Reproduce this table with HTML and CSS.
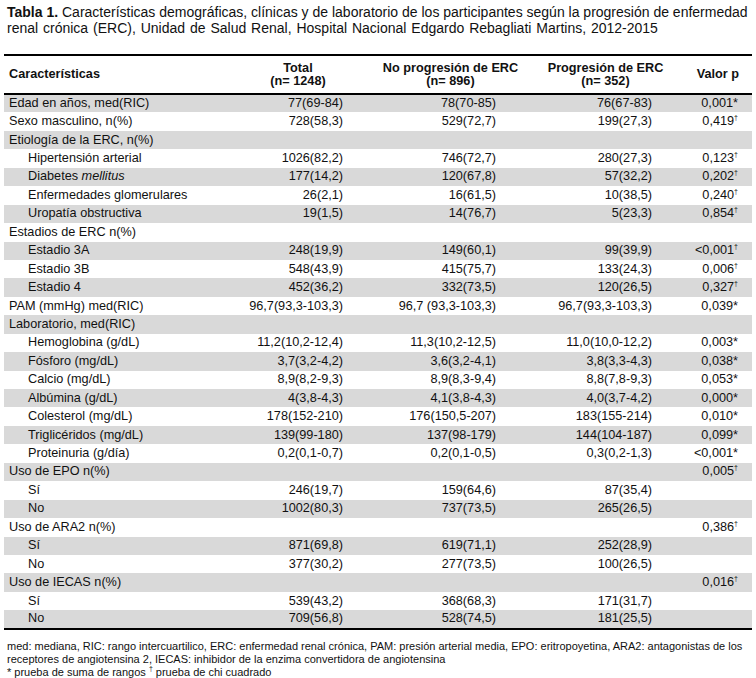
FILE: index.html
```html
<!DOCTYPE html>
<html lang="es">
<head>
<meta charset="utf-8">
<title>Tabla 1</title>
<link rel="stylesheet" href="styles.css">
</head>
<body>
<div class="page">
  <p class="caption"><b>Tabla 1.</b> Características demográficas, clínicas y de laboratorio de los participantes según la progresión de enfermedad<br><span class="cap2">renal crónica (ERC), Unidad de Salud Renal, Hospital Nacional Edgardo Rebagliati Martins, 2012-2015</span></p>
  <table class="data">
    <colgroup>
      <col class="c1"><col class="c2"><col class="c3"><col class="c4"><col class="c5">
    </colgroup>
    <thead>
      <tr>
        <th class="lbl">Características</th>
        <th>Total<br>(n= 1248)</th>
        <th>No progresión de ERC<br>(n= 896)</th>
        <th>Progresión de ERC<br>(n= 352)</th>
        <th class="pv">Valor p</th>
      </tr>
    </thead>
    <tbody>
      <tr class="sh"><td class="lbl">Edad en años, med(RIC)</td><td>77(69-84)</td><td>78(70-85)</td><td>76(67-83)</td><td class="pv">0,001*</td></tr>
      <tr><td class="lbl">Sexo masculino, n(%)</td><td>728(58,3)</td><td>529(72,7)</td><td>199(27,3)</td><td class="pv">0,419<sup>†</sup></td></tr>
      <tr class="sh"><td class="lbl">Etiología de la ERC, n(%)</td><td></td><td></td><td></td><td class="pv"></td></tr>
      <tr><td class="lbl in">Hipertensión arterial</td><td>1026(82,2)</td><td>746(72,7)</td><td>280(27,3)</td><td class="pv">0,123<sup>†</sup></td></tr>
      <tr class="sh"><td class="lbl in">Diabetes <i>mellitus</i></td><td>177(14,2)</td><td>120(67,8)</td><td>57(32,2)</td><td class="pv">0,202<sup>†</sup></td></tr>
      <tr><td class="lbl in">Enfermedades glomerulares</td><td>26(2,1)</td><td>16(61,5)</td><td>10(38,5)</td><td class="pv">0,240<sup>†</sup></td></tr>
      <tr class="sh"><td class="lbl in">Uropatía obstructiva</td><td>19(1,5)</td><td>14(76,7)</td><td>5(23,3)</td><td class="pv">0,854<sup>†</sup></td></tr>
      <tr><td class="lbl">Estadios de ERC n(%)</td><td></td><td></td><td></td><td class="pv"></td></tr>
      <tr class="sh"><td class="lbl in">Estadio 3A</td><td>248(19,9)</td><td>149(60,1)</td><td>99(39,9)</td><td class="pv">&lt;0,001<sup>†</sup></td></tr>
      <tr><td class="lbl in">Estadio 3B</td><td>548(43,9)</td><td>415(75,7)</td><td>133(24,3)</td><td class="pv">0,006<sup>†</sup></td></tr>
      <tr class="sh"><td class="lbl in">Estadio 4</td><td>452(36,2)</td><td>332(73,5)</td><td>120(26,5)</td><td class="pv">0,327<sup>†</sup></td></tr>
      <tr><td class="lbl">PAM (mmHg) med(RIC)</td><td>96,7(93,3-103,3)</td><td>96,7 (93,3-103,3)</td><td>96,7(93,3-103,3)</td><td class="pv">0,039*</td></tr>
      <tr class="sh"><td class="lbl">Laboratorio, med(RIC)</td><td></td><td></td><td></td><td class="pv"></td></tr>
      <tr><td class="lbl in">Hemoglobina (g/dL)</td><td>11,2(10,2-12,4)</td><td>11,3(10,2-12,5)</td><td>11,0(10,0-12,2)</td><td class="pv">0,003*</td></tr>
      <tr class="sh"><td class="lbl in">Fósforo (mg/dL)</td><td>3,7(3,2-4,2)</td><td>3,6(3,2-4,1)</td><td>3,8(3,3-4,3)</td><td class="pv">0,038*</td></tr>
      <tr><td class="lbl in">Calcio (mg/dL)</td><td>8,9(8,2-9,3)</td><td>8,9(8,3-9,4)</td><td>8,8(7,8-9,3)</td><td class="pv">0,053*</td></tr>
      <tr class="sh"><td class="lbl in">Albúmina (g/dL)</td><td>4(3,8-4,3)</td><td>4,1(3,8-4,3)</td><td>4,0(3,7-4,2)</td><td class="pv">0,000*</td></tr>
      <tr><td class="lbl in">Colesterol (mg/dL)</td><td>178(152-210)</td><td>176(150,5-207)</td><td>183(155-214)</td><td class="pv">0,010*</td></tr>
      <tr class="sh"><td class="lbl in">Triglicéridos (mg/dL)</td><td>139(99-180)</td><td>137(98-179)</td><td>144(104-187)</td><td class="pv">0,099*</td></tr>
      <tr><td class="lbl in">Proteinuria (g/día)</td><td>0,2(0,1-0,7)</td><td>0,2(0,1-0,5)</td><td>0,3(0,2-1,3)</td><td class="pv">&lt;0,001*</td></tr>
      <tr class="sh"><td class="lbl">Uso de EPO n(%)</td><td></td><td></td><td></td><td class="pv">0,005<sup>†</sup></td></tr>
      <tr><td class="lbl in">Sí</td><td>246(19,7)</td><td>159(64,6)</td><td>87(35,4)</td><td class="pv"></td></tr>
      <tr class="sh"><td class="lbl in">No</td><td>1002(80,3)</td><td>737(73,5)</td><td>265(26,5)</td><td class="pv"></td></tr>
      <tr><td class="lbl">Uso de ARA2 n(%)</td><td></td><td></td><td></td><td class="pv">0,386<sup>†</sup></td></tr>
      <tr class="sh"><td class="lbl in">Sí</td><td>871(69,8)</td><td>619(71,1)</td><td>252(28,9)</td><td class="pv"></td></tr>
      <tr><td class="lbl in">No</td><td>377(30,2)</td><td>277(73,5)</td><td>100(26,5)</td><td class="pv"></td></tr>
      <tr class="sh"><td class="lbl">Uso de IECAS n(%)</td><td></td><td></td><td></td><td class="pv">0,016<sup>†</sup></td></tr>
      <tr><td class="lbl in">Sí</td><td>539(43,2)</td><td>368(68,3)</td><td>171(31,7)</td><td class="pv"></td></tr>
      <tr class="sh"><td class="lbl in">No</td><td>709(56,8)</td><td>528(74,5)</td><td>181(25,5)</td><td class="pv"></td></tr>
    </tbody>
  </table>
  <div class="notes">
    <p>med: mediana, RIC: rango intercuartilico, ERC: enfermedad renal crónica, PAM: presión arterial media, EPO: eritropoyetina, ARA2: antagonistas de los receptores de angiotensina 2, IECAS: inhibidor de la enzima convertidora de angiotensina</p>
    <p>* prueba de suma de rangos <sup>†</sup> prueba de chi cuadrado</p>
  </div>
</div>
</body>
</html>
```

FILE: styles.css
```css
html, body {
  margin: 0;
  padding: 0;
  background: #fff;
}
body {
  font-family: "Liberation Sans", Arial, sans-serif;
  color: #111;
}
.page {
  padding: 4px 4px 0 4px;
  width: 748px;
}
.caption {
  margin: 0 0 0 3px;
  font-size: 14px;
  line-height: 16px;
  white-space: nowrap;
}
.cap2 {
  word-spacing: 1px;
}
.data {
  margin-top: 18px;
  width: 748px;
  border-collapse: collapse;
  table-layout: fixed;
  font-size: 12.7px;
}
.c1 { width: 218px; }
.c2 { width: 152px; }
.c3 { width: 153px; }
.c4 { width: 157px; }
.c5 { width: 68px; }
.data thead tr {
  border-top: 2.5px solid #000;
  border-bottom: 2.5px solid #000;
}
.data th {
  font-weight: bold;
  text-align: center;
  line-height: 13px;
  height: 37px;
  padding: 0;
  vertical-align: middle;
}
.data th.lbl {
  text-align: left;
  padding-left: 5px;
}
.data th.pv {
  text-align: right;
  padding-right: 13px;
}
.data tbody tr {
  height: 18.45px;
}
.data tbody tr:last-child {
  border-bottom: 2.5px solid #000;
}
.data td {
  padding: 0 31px 0 0;
  text-align: right;
  line-height: 15px;
  white-space: nowrap;
}
.data td.lbl {
  text-align: left;
  padding: 0 0 0 5px;
}
.data td.in {
  padding-left: 24px;
}
.data td:nth-child(4) {
  padding-right: 32px;
}
.data td.pv {
  padding-right: 14px;
}
.sh {
  background: #d9d9d9;
}
sup {
  font-size: 7px;
  vertical-align: 5px;
  line-height: 0;
}
.notes {
  margin: 10px 0 0 3px;
  font-size: 11px;
  line-height: 13px;
}
.notes p {
  margin: 0;
}
```
